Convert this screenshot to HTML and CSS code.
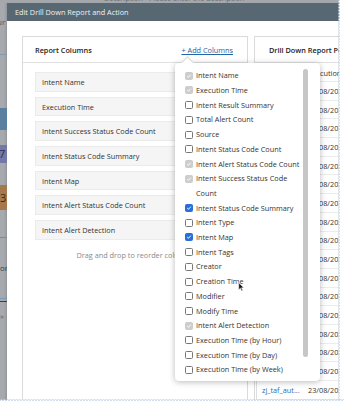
FILE: index.html
```html
<!DOCTYPE html>
<html>
<head>
<meta charset="utf-8">
<link rel="stylesheet" href="styles.css">
</head>
<body>
<div class="page">
  <div class="topbar"><span class="desc">Description - Please enter the description</span></div>
  <div class="main">
    <div class="strip">
      <div class="s-txt">ur</div>
      <div class="s-line"></div>
      <div class="s-blue"></div>
      <div class="s-purple">7</div>
      <div class="s-orange">3</div>
      <div class="s-line2"></div>
      <div class="s-txt2">or</div>
      <div class="s-bars"><i></i><i></i></div>
      <div class="s-chev">&raquo;</div>
    </div>
    <div class="modal">
      <div class="modal-head">Edit Drill Down Report and Action</div>
      <div class="modal-body">
        <section class="panel cols">
          <div class="panel-head"><span>Report Columns</span><span class="add">+ Add Columns</span></div>
          <div class="items">
            <div class="item">Intent Name</div>
            <div class="item">Execution Time</div>
            <div class="item">Intent Success Status Code Count</div>
            <div class="item">Intent Status Code Summary</div>
            <div class="item">Intent Map</div>
            <div class="item">Intent Alert Status Code Count</div>
            <div class="item">Intent Alert Detection</div>
          </div>
          <div class="hint">Drag and drop to reorder columns</div>

          <div class="dropdown">
            <div class="opts">
              <div class="opt"><span class="cb dis"><svg viewBox="0 0 8 8"><path d="M1.6 4.1 L3.3 5.7 L6.4 2.3"/></svg></span><span>Intent Name</span></div>
              <div class="opt"><span class="cb dis"><svg viewBox="0 0 8 8"><path d="M1.6 4.1 L3.3 5.7 L6.4 2.3"/></svg></span><span>Execution Time</span></div>
              <div class="opt"><span class="cb"></span><span>Intent Result Summary</span></div>
              <div class="opt"><span class="cb"></span><span>Total Alert Count</span></div>
              <div class="opt"><span class="cb"></span><span>Source</span></div>
              <div class="opt"><span class="cb"></span><span>Intent Status Code Count</span></div>
              <div class="opt"><span class="cb dis"><svg viewBox="0 0 8 8"><path d="M1.6 4.1 L3.3 5.7 L6.4 2.3"/></svg></span><span>Intent Alert Status Code Count</span></div>
              <div class="opt"><span class="cb dis"><svg viewBox="0 0 8 8"><path d="M1.6 4.1 L3.3 5.7 L6.4 2.3"/></svg></span><span>Intent Success Status Code Count</span></div>
              <div class="opt"><span class="cb on"><svg viewBox="0 0 8 8"><path d="M1.6 4.1 L3.3 5.7 L6.4 2.3"/></svg></span><span>Intent Status Code Summary</span></div>
              <div class="opt"><span class="cb"></span><span>Intent Type</span></div>
              <div class="opt"><span class="cb on"><svg viewBox="0 0 8 8"><path d="M1.6 4.1 L3.3 5.7 L6.4 2.3"/></svg></span><span>Intent Map</span></div>
              <div class="opt"><span class="cb"></span><span>Intent Tags</span></div>
              <div class="opt"><span class="cb"></span><span>Creator</span></div>
              <div class="opt"><span class="cb"></span><span>Creation Time</span></div>
              <div class="opt"><span class="cb"></span><span>Modifier</span></div>
              <div class="opt"><span class="cb"></span><span>Modify Time</span></div>
              <div class="opt"><span class="cb dis"><svg viewBox="0 0 8 8"><path d="M1.6 4.1 L3.3 5.7 L6.4 2.3"/></svg></span><span>Intent Alert Detection</span></div>
              <div class="opt"><span class="cb"></span><span>Execution Time (by Hour)</span></div>
              <div class="opt"><span class="cb"></span><span>Execution Time (by Day)</span></div>
              <div class="opt"><span class="cb"></span><span>Execution Time (by Week)</span></div>
            </div>
            <div class="scroll"><div class="thumb"></div></div>
            <svg class="cursor" viewBox="0 0 10 14"><path d="M1 1 L1 11 L3.4 8.8 L5.2 12.6 L6.8 11.9 L5 8.2 L8.3 8.2 Z"/></svg>
          </div>
        </section>

        <section class="panel preview">
          <div class="panel-head"><span>Drill Down Report Preview</span></div>
          <div class="ptable">
            <div class="prow phead"><span class="pname"></span><span class="pdate">Execution Time</span></div>
            <div class="prow"><span class="pname"></span><span class="pdate">23/08/2023</span></div>
            <div class="prow"><span class="pname"></span><span class="pdate">23/08/2023</span></div>
            <div class="prow"><span class="pname"></span><span class="pdate">23/08/2023</span></div>
            <div class="prow"><span class="pname"></span><span class="pdate">23/08/2023</span></div>
            <div class="prow"><span class="pname"></span><span class="pdate">23/08/2023</span></div>
            <div class="prow"><span class="pname"></span><span class="pdate">23/08/2023</span></div>
            <div class="prow"><span class="pname"></span><span class="pdate">23/08/2023</span></div>
            <div class="prow"><span class="pname"></span><span class="pdate">23/08/2023</span></div>
            <div class="prow"><span class="pname"></span><span class="pdate">23/08/2023</span></div>
            <div class="prow"><span class="pname"></span><span class="pdate">23/08/2023</span></div>
            <div class="prow"><span class="pname"></span><span class="pdate">23/08/2023</span></div>
            <div class="prow"><span class="pname"></span><span class="pdate">23/08/2023</span></div>
            <div class="prow"><span class="pname"></span><span class="pdate">23/08/2023</span></div>
            <div class="prow"><span class="pname"></span><span class="pdate">23/08/2023</span></div>
            <div class="prow"><span class="pname"></span><span class="pdate">23/08/2023</span></div>
            <div class="prow"><span class="pname"></span><span class="pdate">23/08/2023</span></div>
            <div class="prow"><span class="pname">zj_taf_aut...</span><span class="pdate">23/08/2023</span></div>
          </div>
        </section>
      </div>
    </div>
  </div>
  <svg class="tear" width="344" height="405" viewBox="0 0 344 405">
    <defs>
      <pattern id="zr" x="338" y="0" width="6" height="3" patternUnits="userSpaceOnUse">
        <path d="M1.5 0 L0.2 1.5 L1.5 3 L6 3 L6 0 Z" fill="#fff"/>
        <path d="M1.5 0 L0.2 1.5 L1.5 3" fill="none" stroke="#a9c1d5" stroke-width="0.8"/>
      </pattern>
      <pattern id="zb" x="0" y="399" width="3" height="6" patternUnits="userSpaceOnUse">
        <path d="M0 1.6 L1.5 0.3 L3 1.6 L3 6 L0 6 Z" fill="#fff"/>
        <path d="M0 1.6 L1.5 0.3 L3 1.6" fill="none" stroke="#a9c1d5" stroke-width="0.8"/>
      </pattern>
    </defs>
    <rect x="338" y="0" width="6" height="405" fill="url(#zr)"/>
    <rect x="0" y="399" width="344" height="6" fill="url(#zb)"/>
  </svg>
</div>
</body>
</html>
```

FILE: styles.css
```css
* { box-sizing: border-box; margin: 0; padding: 0; }
html, body { width: 344px; height: 405px; overflow: hidden; }
body { font-family: "Open Sans", "DejaVu Sans", sans-serif; font-size: 7.3px; color: #333; background: #fff; }

.page { position: relative; width: 344px; height: 405px; background: #a4a8ac; display: flex; flex-direction: column; overflow: hidden; }
.topbar { height: 3px; flex: none; overflow: hidden; }
.desc { display: block; margin-top: -7px; padding-left: 104px; line-height: 10px; color: #6a6e72; white-space: nowrap; }

.main { flex: 1; display: flex; min-height: 0; }
.strip { width: 7px; flex: none; display: flex; flex-direction: column; overflow: hidden; background: linear-gradient(90deg, #a6aaae 0, #a6aaae 4px, #93979b 7px); color: #3f4347; font-size: 8px; }
.s-txt { margin-top: 14px; height: 9px; line-height: 9px; margin-left: -3px; color: #55595d; }
.s-line { margin-top: 28px; height: 1px; background: #7f9bb3; }
.s-blue { margin-top: 53px; height: 22px; background: #5b7f9e; }
.s-purple { margin-top: 15px; height: 18px; background: #7478a8; line-height: 18px; font-size: 11px; margin-left: -1px; color: #2d2f45; }
.s-orange { margin-top: 22px; height: 25px; background: #a6794c; line-height: 25px; font-size: 11px; color: #3a2a1a; }
.s-line2 { margin-top: 27px; height: 1px; background: #6f8fb0; }
.s-txt2 { margin-top: 25px; height: 9px; line-height: 9px; color: #3a3e42; }
.s-bars { margin-top: 26px; display: flex; flex-direction: column; gap: 2px; }
.s-bars i { display: block; height: 1px; background: #7a9ab5; }
.s-bars i + i { background: #3d4146; }
.s-chev { margin-top: 10px; line-height: 8px; color: #5a5e62; font-size: 8px; }

.modal { flex: 1; display: flex; flex-direction: column; background: #fff; min-width: 0; }
.modal-head { height: 18px; flex: none; background: #586873; color: #eef2f5; padding-left: 8px; line-height: 18px; white-space: nowrap; }
.modal-body { flex: 1; display: flex; gap: 6px; padding: 15px 0 0 15px; min-height: 0; overflow: hidden; }

.panel { border: 1px solid #dadada; border-bottom: none; background: #fff; display: flex; flex-direction: column; }
.cols { width: 226px; flex: none; position: relative; }
.preview { width: 200px; flex: none; overflow: hidden; }
.panel-head { height: 26px; flex: none; border-bottom: 1px solid #e2e2e2; display: flex; align-items: center; justify-content: space-between; padding: 0 14px 0 12px; font-weight: 600; color: #222; white-space: nowrap; }
.preview .panel-head { padding-left: 14px; }
.add { color: #2364a5; text-decoration: underline; text-underline-offset: 1px; font-weight: 400; }

.items { padding: 9px 12px 0; display: flex; flex-direction: column; gap: 5px; }
.item { height: 19.7px; background: #f5f5f5; border: 1px solid #ebebeb; padding-left: 6px; display: flex; align-items: center; color: #333; white-space: nowrap; }
.hint { padding-top: 10px; line-height: 10px; text-align: center; color: #8a8a8a; white-space: nowrap; }

.dropdown { position: absolute; z-index: 10; left: 152px; top: 26px; width: 145px; height: 318px; background: #fff; border-radius: 4px; box-shadow: 0 1px 6px rgba(0,0,0,0.28); display: flex; padding: 5.3px 12px 0 10px; }
.dropdown::before { content: ""; position: absolute; left: 7.5px; top: -5.4px; width: 8px; height: 8px; background: #fff; border-top: 1px solid #d6d6d6; border-left: 1px solid #d6d6d6; transform: rotate(45deg); }
.opts { width: 116px; flex: none; height: 309px; overflow: hidden; position: relative; }
.opt { display: flex; align-items: flex-start; gap: 3px; line-height: 14.7px; color: #333; }
.cb { flex: none; width: 8px; height: 8px; margin-top: 3.4px; border: 1px solid #777; border-radius: 1.5px; background: #fff; display: flex; }
.cb svg { width: 100%; height: 100%; }
.cb path { fill: none; stroke: #fff; stroke-width: 1.3; }
.cb.dis { background: #cdcdcd; border-color: #cdcdcd; }
.cb.on { background: #2a6fd8; border-color: #2a6fd8; }
.scroll { margin-left: 2px; width: 4.5px; flex: none; padding-top: 0.7px; }
.thumb { height: 288px; background: #c6c6c6; border-radius: 2.5px; }
.cursor { position: absolute; left: 63px; top: 219px; width: 7px; height: 10px; }
.cursor path { fill: #111; stroke: #fff; stroke-width: 0.8; }

.ptable { margin: 1px 0 0 1px; border-left: 1px solid #dedede; display: flex; flex-direction: column; }
.prow { height: 18.7px; display: flex; align-items: center; border-bottom: 1px solid #ececec; white-space: nowrap; }
.phead { height: 18px; }
.pname { width: 45px; flex: none; padding-left: 5px; color: #2a6db0; overflow: hidden; }
.pdate { padding-left: 6px; color: #333; }

.tear { position: absolute; left: 0; top: 0; z-index: 50; }
```
